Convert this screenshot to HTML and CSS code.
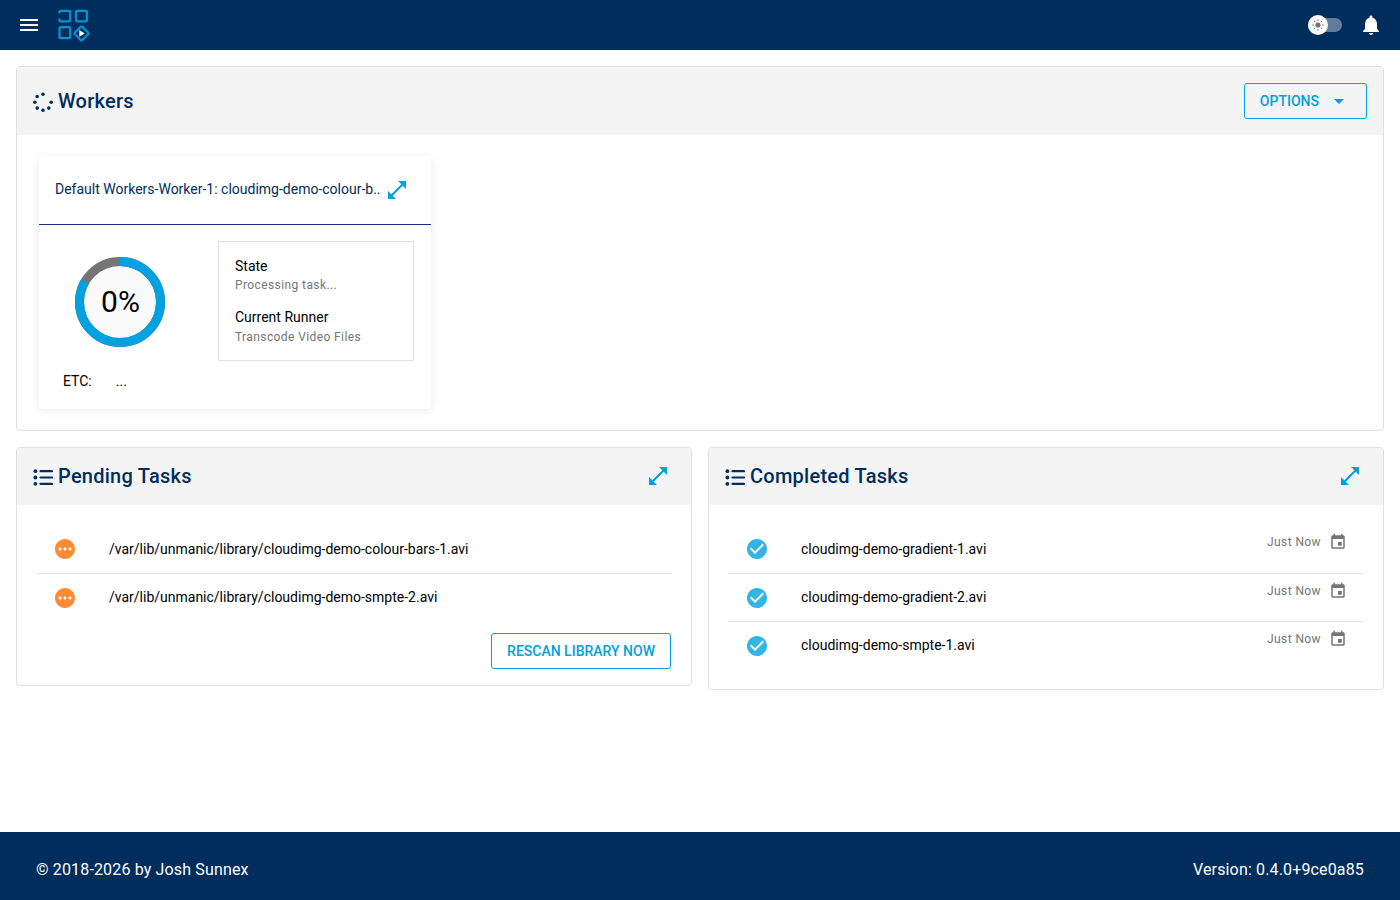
FILE: index.html
```html
<!DOCTYPE html>
<html lang="en">
<head>
  <meta charset="utf-8">
  <title>Unmanic - Dashboard</title>
  <link rel="stylesheet" href="styles.css">
</head>
<body>

<svg class="sprite">
  <symbol id="menu" viewBox="0 0 24 24"><path d="M3 18h18v-2H3v2zm0-5h18v-2H3v2zm0-7v2h18V6H3z"/></symbol>
  <symbol id="bell" viewBox="0 0 24 24"><path d="M12 22c1.1 0 2-.9 2-2h-4c0 1.1.89 2 2 2zm6-6v-5c0-3.07-1.64-5.64-4.5-6.32V4c0-.83-.67-1.5-1.5-1.5s-1.5.67-1.5 1.5v.68C7.63 5.36 6 7.92 6 11v5l-2 2v1h16v-1l-2-2z"/></symbol>
  <symbol id="caret" viewBox="0 0 24 24"><path d="M7 10l5 5 5-5z"/></symbol>
  <symbol id="expand" viewBox="0 0 24 24"><path d="M21 11V3h-8l3.29 3.29-10 10L3 13v8h8l-3.29-3.29 10-10z"/></symbol>
  <symbol id="list" viewBox="0 0 20 20">
    <circle cx="2.4" cy="3.2" r="1.9"/><circle cx="2.4" cy="9.5" r="1.9"/><circle cx="2.4" cy="15.8" r="1.9"/>
    <path d="M7.500 3.200H19M7.500 9.500H19M7.500 15.800H19" stroke="currentColor" stroke-width="2.200" stroke-linecap="round"/>
  </symbol>
  <symbol id="pending" viewBox="0 0 24 24"><path d="M12 2C6.480 2 2 6.480 2 12s4.480 10 10 10 10-4.480 10-10S17.520 2 12 2zM7 13.500c-.83 0-1.500-.67-1.500-1.500s.67-1.500 1.500-1.500 1.500.67 1.500 1.500-.67 1.500-1.500 1.500zm5 0c-.83 0-1.500-.67-1.500-1.500s.67-1.500 1.500-1.500 1.500.67 1.500 1.500-.67 1.500-1.500 1.500zm5 0c-.83 0-1.500-.67-1.500-1.500s.67-1.500 1.500-1.500 1.500.67 1.500 1.500-.67 1.500-1.500 1.500z"/></symbol>
  <symbol id="check" viewBox="0 0 24 24"><path d="M12 2C6.480 2 2 6.480 2 12s4.480 10 10 10 10-4.480 10-10S17.520 2 12 2zm-2 15l-5-5 1.410-1.410L10 14.170l7.590-7.590L19 8l-9 9z"/></symbol>
  <symbol id="event" viewBox="0 0 24 24"><path d="M17 12h-5v5h5v-5zM16 1v2H8V1H6v2H5c-1.110 0-1.990.9-1.990 2L3 19c0 1.100.89 2 2 2h14c1.100 0 2-.9 2-2V5c0-1.100-.9-2-2-2h-1V1h-2zm3 18H5V8h14v11z"/></symbol>
</svg>

<header class="topbar">
  <svg class="icon menu"><use href="#menu"/></svg>
  <svg class="logo" viewBox="0 0 34 34">
    <g fill="none" stroke="#0093d5" stroke-width="2.2">
      <path d="M2.500 5.500V4Q2.500 2.800 3.700 2.800H12Q13.200 2.800 13.200 4V12.200Q13.200 13.400 12 13.400H3.700Q2.500 13.400 2.500 12.200V10.500"/>
      <rect x="19" y="2.800" width="11" height="10.600" rx="1.200"/>
      <rect x="2.500" y="19.200" width="10.700" height="11" rx="1.200"/>
      <rect x="19.300" y="20.200" width="10.400" height="10.400" rx="1.500" transform="rotate(45 24.500 25.400)"/>
    </g>
    <path d="M22.300 22l5.500 3.400-5.500 3.400z" fill="#fff"/>
  </svg>
  <div class="toggle">
    <div class="thumb">
      <svg viewBox="0 0 12 12">
        <circle cx="6" cy="6" r="2.600"/>
        <path d="M6 .3v1.700M6 10v1.700M.3 6H2M10 6h1.700M2 2l1.100 1.100M8.900 8.900L10 10M10 2L8.900 3.100M3.100 8.900L2 10" stroke="#757575" stroke-width="1"/>
      </svg>
    </div>
  </div>
  <svg class="icon"><use href="#bell"/></svg>
</header>

<main>
  <section class="card workers">
    <div class="card-head">
      <svg class="head-icon" viewBox="0 0 20 20">
        <circle cx="10" cy="2.200" r="1.800"/>
        <circle cx="18.200" cy="10.300" r="1.800"/><circle cx="15.800" cy="16.100" r="1.800"/>
        <circle cx="10" cy="18.200" r="1.800"/><circle cx="4.200" cy="16.100" r="1.800"/>
        <circle cx="1.900" cy="10.300" r="1.800"/><circle cx="4.200" cy="4.500" r="1.800"/>
      </svg>
      <h6>Workers</h6>
      <button class="btn options">Options <svg class="icon"><use href="#caret"/></svg></button>
    </div>
    <div class="worker">
      <div class="worker-head">
        <span>Default Workers-Worker-1: cloudimg-demo-colour-b..</span>
        <svg class="icon"><use href="#expand"/></svg>
      </div>
      <div class="worker-body">
        <div class="progress">
          <svg viewBox="0 0 90 90">
            <circle cx="45" cy="45" r="37" fill="#fafafa"/>
            <circle class="track" cx="45" cy="45" r="40.500"/>
            <circle class="bar" cx="45" cy="45" r="40.500" pathLength="360"/>
          </svg>
          <span>0%</span>
        </div>
        <dl class="state">
          <dt>State</dt>
          <dd>Processing task...</dd>
          <dt>Current Runner</dt>
          <dd>Transcode Video Files</dd>
        </dl>
      </div>
      <div class="etc"><span>ETC:</span><span>...</span></div>
    </div>
  </section>

  <div class="columns">
    <section class="card tasks">
      <div class="card-head">
        <svg class="head-icon"><use href="#list"/></svg>
        <h6>Pending Tasks</h6>
        <svg class="icon expand"><use href="#expand"/></svg>
      </div>
      <ul>
        <li><svg class="icon orange"><use href="#pending"/></svg><span>/var/lib/unmanic/library/cloudimg-demo-colour-bars-1.avi</span></li>
        <li><svg class="icon orange"><use href="#pending"/></svg><span>/var/lib/unmanic/library/cloudimg-demo-smpte-2.avi</span></li>
      </ul>
      <div class="actions"><button class="btn">Rescan Library Now</button></div>
    </section>

    <section class="card tasks">
      <div class="card-head">
        <svg class="head-icon"><use href="#list"/></svg>
        <h6>Completed Tasks</h6>
        <svg class="icon expand"><use href="#expand"/></svg>
      </div>
      <ul class="completed">
        <li><svg class="icon blue"><use href="#check"/></svg><span>cloudimg-demo-gradient-1.avi</span>
          <div class="when">Just Now <svg><use href="#event"/></svg></div></li>
        <li><svg class="icon blue"><use href="#check"/></svg><span>cloudimg-demo-gradient-2.avi</span>
          <div class="when">Just Now <svg><use href="#event"/></svg></div></li>
        <li><svg class="icon blue"><use href="#check"/></svg><span>cloudimg-demo-smpte-1.avi</span>
          <div class="when">Just Now <svg><use href="#event"/></svg></div></li>
      </ul>
    </section>
  </div>
</main>

<footer>
  <span>© 2018-2026 by Josh Sunnex</span>
  <span>Version: 0.4.0+9ce0a85</span>
</footer>

</body>
</html>
```
FILE: styles.css
```css
* {
  box-sizing: border-box;
}

body {
  margin: 0;
  min-height: 100vh;
  display: flex;
  flex-direction: column;
  font-family: Roboto, sans-serif;
  font-size: 14px;
  line-height: 1.5;
  color: #000;
  background: #fff;
}

svg {
  fill: currentColor;
  flex: none;
}

.sprite {
  display: none;
}

.icon {
  width: 24px;
  height: 24px;
}

.topbar {
  height: 50px;
  padding: 0 17px;
  display: flex;
  align-items: center;
  background: #002e5c;
  color: #fff;
}

.logo {
  width: 34px;
  height: 34px;
  margin-left: 16px;
}

.toggle {
  width: 34px;
  height: 14px;
  margin-left: auto;
  margin-right: 17px;
  background: rgba(255, 255, 255, 0.38);
  display: flex;
  align-items: center;
  border-radius: 7px;
}

.thumb {
  width: 20px;
  height: 20px;
  border-radius: 50%;
  background: #fff;
  color: #757575;
  display: flex;
  align-items: center;
  justify-content: center;
}

.thumb svg {
  width: 12px;
  height: 12px;
}

main {
  flex: 1;
  padding: 16px;
}

.card {
  border: 1px solid #e0e0e0;
  border-radius: 4px;
}

.card-head {
  height: 57px;
  padding: 0 16px 1px;
  display: flex;
  align-items: center;
  background: #f4f4f4;
  color: #002e5c;
  border-radius: 3px 3px 0 0;
}

.head-icon {
  width: 20px;
  height: 20px;
  margin: 3px 5px 0 0;
}

h6 {
  margin: 0;
  flex: 1;
  font-size: 20px;
  font-weight: 500;
  line-height: 32px;
  letter-spacing: 0.0125em;
}

.btn {
  height: 36px;
  padding: 0 15px;
  border: 1px solid #00a1e0;
  border-radius: 3px;
  background: none;
  color: #00a1e0;
  font: 500 14px/24px Roboto, sans-serif;
  text-transform: uppercase;
}

.options {
  display: flex;
  align-items: center;
  gap: 8px;
}

.expand,
.worker-head .icon {
  color: #00a1e0;
}

.expand {
  margin-right: 5px;
}

.workers {
  height: 365px;
}

.workers .card-head {
  height: 68px;
  padding-bottom: 0;
}

.workers .head-icon {
  margin-top: 2px;
}

.worker {
  width: 391.5px;
  height: 253px;
  margin: 21px 0 0 22px;
  border-radius: 4px;
  box-shadow: 0 2px 10px rgba(0, 0, 0, 0.08);
}

.worker-head {
  height: 69px;
  padding: 0 21.5px 0 16px;
  display: flex;
  align-items: center;
  justify-content: space-between;
  border-bottom: 1px solid #1a3080;
  color: #002e5c;
}

.worker-head span {
  padding-bottom: 2px;
}

.worker-body {
  display: flex;
  padding: 16px 16.5px 0 36px;
}

.progress {
  width: 90px;
  height: 90px;
  margin-top: 16px;
  display: grid;
  place-items: center;
}

.progress > * {
  grid-area: 1 / 1;
}

.progress svg {
  width: 90px;
  height: 90px;
}

.progress span {
  padding-left: 1px;
  font-size: 30px;
  line-height: 1;
}

.track,
.bar {
  fill: none;
  stroke: #757575;
  stroke-width: 9;
}

.bar {
  stroke: #00a1e0;
  stroke-dasharray: 300 60;
  transform: rotate(-90deg);
  transform-origin: center;
}

.state {
  width: 196px;
  height: 120px;
  margin: 0 0 0 auto;
  padding: 16px;
  border: 1px solid #e0e0e0;
}

dt {
  line-height: 17px;
}

dd {
  margin: 0 0 14px;
  font-size: 12px;
  line-height: 20px;
  letter-spacing: 0.0333em;
  color: #757575;
}

dd:last-child {
  margin: 1px 0 0;
}

.etc {
  display: flex;
  gap: 24px;
  padding: 10px 24px;
}

.columns {
  display: grid;
  grid-template-columns: 1fr 1fr;
  gap: 16px;
  align-items: start;
  margin-top: 16px;
}

ul {
  margin: 0;
  padding: 20px 20px 0;
  list-style: none;
}

.completed {
  padding-bottom: 20px;
}

li {
  height: 48px;
  padding: 8px 16px;
  display: flex;
  align-items: center;
}

li + li {
  border-top: 1px solid #e0e0e0;
}

li .icon {
  margin-right: 32px;
}

.orange {
  color: #ff8b33;
}

.blue {
  color: #33b4e6;
}

.when {
  margin-left: auto;
  align-self: flex-start;
  display: flex;
  align-items: center;
  gap: 8px;
  font-size: 12px;
  line-height: 18px;
  letter-spacing: 0.0333em;
  color: #757575;
}

.when svg {
  width: 18px;
  height: 18px;
}

.actions {
  display: flex;
  justify-content: flex-end;
  padding: 12px 20px 16px;
}

footer {
  height: 68px;
  padding: 8px 36px 0;
  display: flex;
  align-items: center;
  justify-content: space-between;
  background: #002e5c;
  color: #fff;
  font-size: 16px;
  letter-spacing: 0.00937em;
}
```
